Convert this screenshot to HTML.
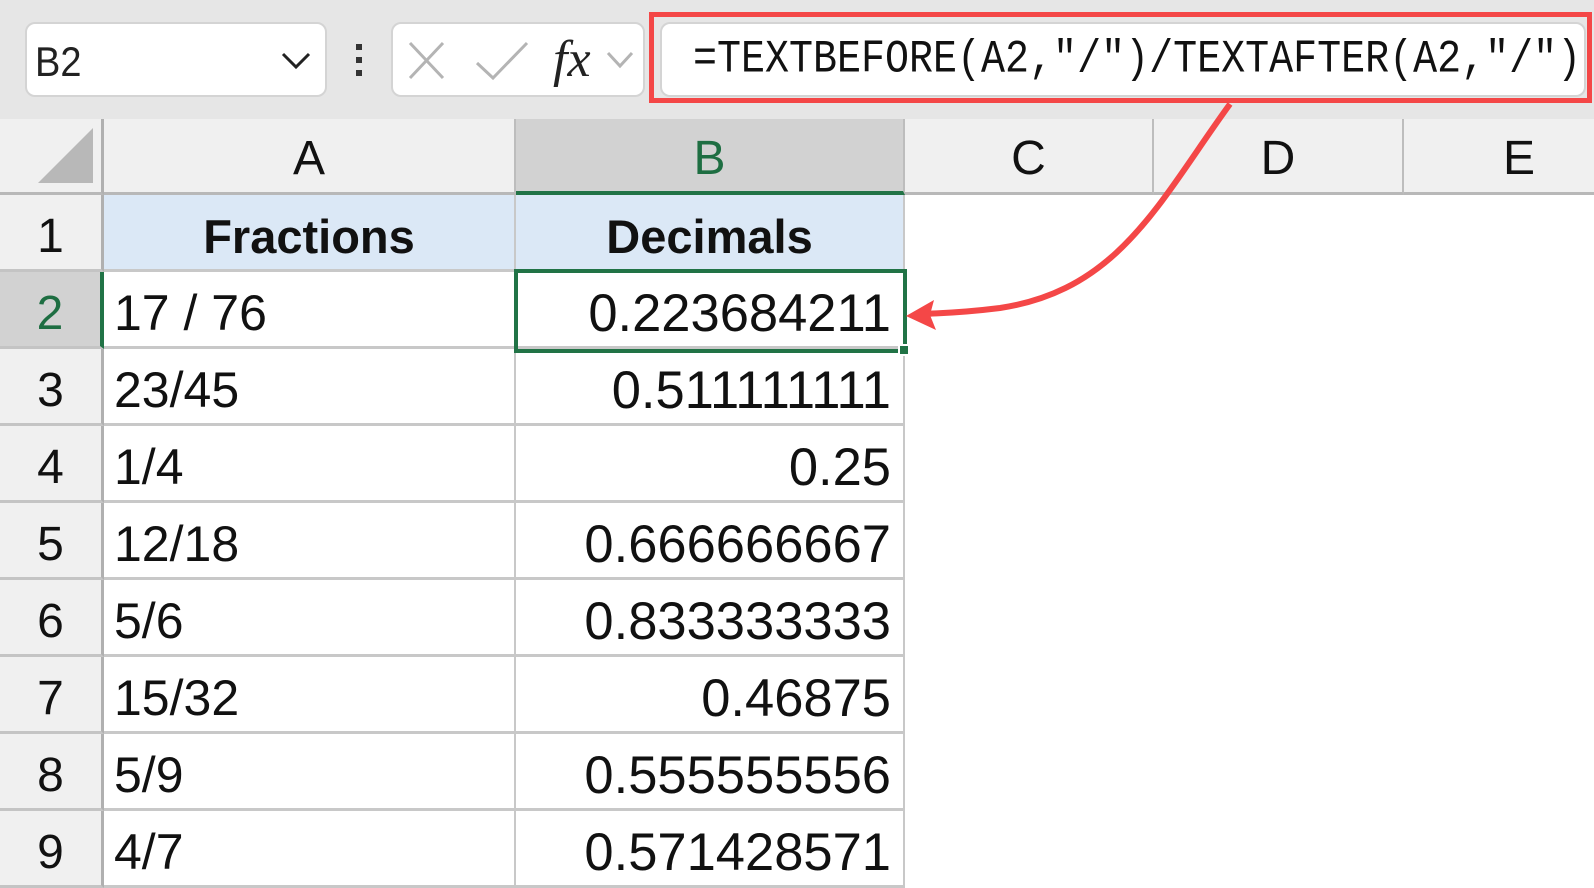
<!DOCTYPE html>
<html><head><meta charset="utf-8"><style>
*{margin:0;padding:0;box-sizing:border-box}
body{width:1594px;height:888px;overflow:hidden;background:#fff;position:relative;font-family:"Liberation Sans",sans-serif}
.abs{position:absolute}
.top{left:0;top:0;width:1594px;height:119px;background:#e6e6e6}
.box{background:#fff;border:2px solid #d4d4d4;border-radius:10px}
.hdr{background:#f0f0f0;border-right:2px solid #bdbdbd;border-bottom:3px solid #b8b8b8;display:flex;align-items:center;justify-content:center;font-size:48px;color:#111;padding-top:6px}
.rh{left:0;width:104px;background:#f0f0f0;border-bottom:3px solid #c4c4c4;border-right:3px solid #b0b0b0;display:flex;align-items:center;justify-content:center;font-size:48px;color:#111;padding-top:8px}
.c{border-right:2px solid #c8c8c8;border-bottom:3px solid #c8c8c8;display:flex;align-items:center;font-size:50px;color:#111;padding-top:8px}
.a{left:104px;width:412px;padding-left:10px}
.b{left:516px;width:389px;justify-content:flex-end;padding-right:12px;font-size:52.5px}
</style></head><body>
<div class="abs top"></div>
<div class="abs box" style="left:25px;top:22px;width:302px;height:75px"></div>
<div class="abs" style="left:35px;top:42px;font-size:38px;color:#222;transform:scaleY(1.1)">B2</div>
<svg class="abs" style="left:280px;top:50px" width="32" height="22"><path d="M3 4 L16 17 L29 4" stroke="#222" stroke-width="3" fill="none"/></svg>
<div class="abs" style="left:356px;top:44px;width:6px;height:6px;background:#333"></div>
<div class="abs" style="left:356px;top:57px;width:6px;height:6px;background:#333"></div>
<div class="abs" style="left:356px;top:70px;width:6px;height:6px;background:#333"></div>
<div class="abs box" style="left:391px;top:22px;width:254px;height:75px"></div>
<svg class="abs" style="left:405px;top:36px" width="230" height="54">
<path d="M5 7 L38 42 M38 7 L5 42" stroke="#b4b4b4" stroke-width="3" fill="none"/>
<path d="M72 27 L88 42 L122 7" stroke="#b4b4b4" stroke-width="3" fill="none"/>
<text x="148" y="40" font-family="Liberation Serif" font-style="italic" font-size="52" fill="#222">fx</text>
<path d="M203 17 L215 30 L227 17" stroke="#b4b4b4" stroke-width="3" fill="none"/>
</svg>
<div class="abs box" style="left:660px;top:22px;width:926px;height:75px;border-radius:10px"></div>
<div class="abs" style="left:649px;top:12px;width:943px;height:91px;border:5px solid #f44747"></div>
<div class="abs" style="left:693px;top:38px;font-family:'Liberation Mono',monospace;font-size:40px;color:#111;transform:scaleY(1.15);transform-origin:0 50%;white-space:pre">=TEXTBEFORE(A2,"/")/TEXTAFTER(A2,"/")</div>

<div class="abs" style="left:0;top:119px;width:104px;height:76px;background:#f0f0f0;border-right:3px solid #b0b0b0;border-bottom:3px solid #b8b8b8"></div>
<svg class="abs" style="left:38px;top:128px" width="56" height="56"><path d="M55 0 L55 55 L0 55 Z" fill="#b8b8b8"/></svg>
<div class="abs hdr" style="left:104px;top:119px;width:412px;height:76px">A</div>
<div class="abs hdr" style="left:516px;top:119px;width:389px;height:76px;background:#d2d2d2;color:#1e6e42;border-bottom:4px solid #217346">B</div>
<div class="abs hdr" style="left:905px;top:119px;width:249px;height:76px">C</div>
<div class="abs hdr" style="left:1154px;top:119px;width:250px;height:76px">D</div>
<div class="abs hdr" style="left:1404px;top:119px;width:200px;height:76px;border-right:none;padding-left:30px">E</div>

<div class="abs rh" style="top:195px;height:77px">1</div>
<div class="abs c a" style="top:195px;height:77px;background:#dbe8f6;justify-content:center;font-weight:bold;font-size:47px;padding-left:0;padding-right:0">Fractions</div>
<div class="abs c b" style="top:195px;height:77px;background:#dbe8f6;justify-content:center;font-weight:bold;font-size:47px;padding-right:0">Decimals</div>

<div class="abs rh" style="top:272px;height:77px;background:#d2d2d2;color:#1e6e42;border-right:4px solid #217346">2</div>
<div class="abs c a" style="top:272px;height:77px">17 / 76</div>
<div class="abs c b" style="top:272px;height:77px">0.223684211</div>

<div class="abs rh" style="top:349px;height:77px">3</div>
<div class="abs c a" style="top:349px;height:77px">23/45</div>
<div class="abs c b" style="top:349px;height:77px">0.511111111</div>

<div class="abs rh" style="top:426px;height:77px">4</div>
<div class="abs c a" style="top:426px;height:77px">1/4</div>
<div class="abs c b" style="top:426px;height:77px">0.25</div>

<div class="abs rh" style="top:503px;height:77px">5</div>
<div class="abs c a" style="top:503px;height:77px">12/18</div>
<div class="abs c b" style="top:503px;height:77px">0.666666667</div>

<div class="abs rh" style="top:580px;height:77px">6</div>
<div class="abs c a" style="top:580px;height:77px">5/6</div>
<div class="abs c b" style="top:580px;height:77px">0.833333333</div>

<div class="abs rh" style="top:657px;height:77px">7</div>
<div class="abs c a" style="top:657px;height:77px">15/32</div>
<div class="abs c b" style="top:657px;height:77px">0.46875</div>

<div class="abs rh" style="top:734px;height:77px">8</div>
<div class="abs c a" style="top:734px;height:77px">5/9</div>
<div class="abs c b" style="top:734px;height:77px">0.555555556</div>

<div class="abs rh" style="top:811px;height:77px">9</div>
<div class="abs c a" style="top:811px;height:77px">4/7</div>
<div class="abs c b" style="top:811px;height:77px">0.571428571</div>

<div class="abs" style="left:514px;top:269px;width:393px;height:84px;border:4px solid #217346"></div>
<div class="abs" style="left:898px;top:344px;width:12px;height:12px;background:#217346;border:2px solid #fff"></div>

<svg class="abs" style="left:0;top:0" width="1594" height="888">
<path d="M1230 104 C1160 200, 1120 290, 1000 308 C960 313, 940 313, 925 314" stroke="#f44747" stroke-width="6" fill="none"/>
<path d="M906 316 L934 300 L930 315 L936 330 Z" fill="#f44747"/>
</svg>
</body></html>
